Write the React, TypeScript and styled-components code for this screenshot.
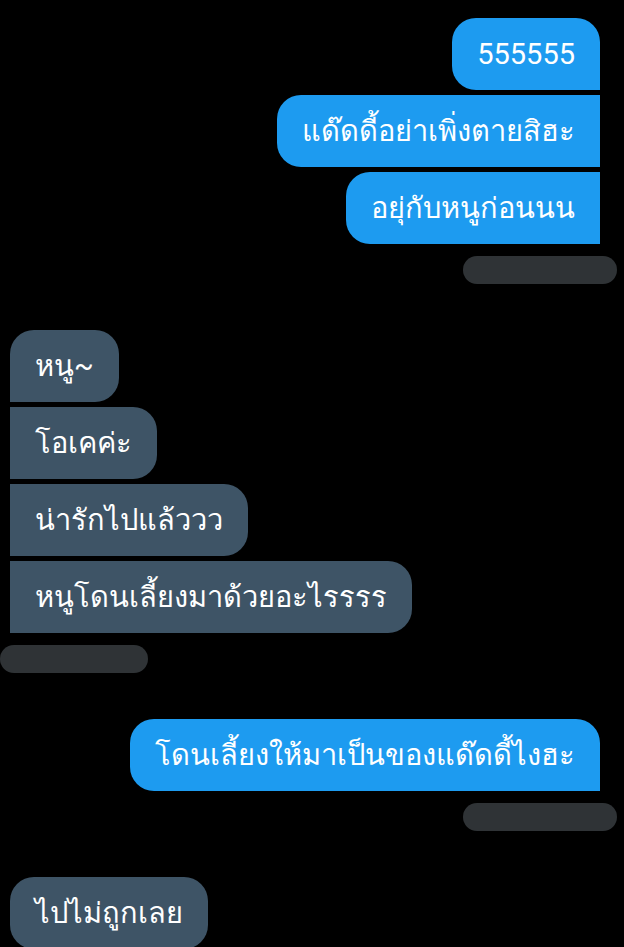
import React, { FC } from 'react';
import styled, { createGlobalStyle } from 'styled-components';

const GlobalStyle = createGlobalStyle`
  html, body {
    margin: 0;
    padding: 0;
    background: #000;
  }
  body {
    font-family: Roboto, "Noto Sans", "DejaVu Sans", sans-serif;
  }
`;

type Side = 'left' | 'right';

interface Message {
  side: Side;
  lines: string[];
}

const conversation: Message[] = [
  { side: 'right', lines: ['555555', 'แด๊ดดี้อย่าเพิ่งตายสิฮะ', 'อยุ่กับหนูก่อนนน'] },
  { side: 'left', lines: ['หนู~', 'โอเคค่ะ', 'น่ารักไปแล้ววว', 'หนูโดนเลี้ยงมาด้วยอะไรรรร'] },
  { side: 'right', lines: ['โดนเลี้ยงให้มาเป็นของแด๊ดดี้ไงฮะ'] },
  { side: 'left', lines: ['ไปไม่ถูกเลย'] },
];

const Page = styled.div`
  min-height: 947px;
  background: #000;
  padding: 18px 24px 0 10px;
  box-sizing: border-box;
  display: flex;
  flex-direction: column;
  overflow: hidden;
`;

const Group = styled.div<{ $side: Side; $last?: boolean }>`
  display: flex;
  flex-direction: column;
  align-items: ${(p) => (p.$side === 'right' ? 'flex-end' : 'flex-start')};
  gap: 5px;
  margin-bottom: ${(p) => (p.$last ? '0' : '46px')};
`;

const R = 24;

function radiusFor(side: Side, index: number): string {
  if (side === 'right') {
    return index === 0 ? `${R}px ${R}px 0 ${R}px` : `${R}px 0 0 ${R}px`;
  }
  return index === 0 ? `${R}px ${R}px ${R}px 0` : `0 ${R}px ${R}px 0`;
}

const Bubble = styled.div<{ $side: Side; $radius: string }>`
  height: 72px;
  box-sizing: border-box;
  display: flex;
  align-items: center;
  padding: 0 25px;
  border-radius: ${(p) => p.$radius};
  background: ${(p) => (p.$side === 'right' ? '#1d9bf0' : '#3e5466')};
  color: #fff;
  font-size: 29px;
  line-height: 40px;
  white-space: nowrap;
`;

// redacted timestamp row under each group
const Meta = styled.div<{ $side: Side }>`
  width: 154px;
  height: 28px;
  margin-top: 7px;
  border-radius: 14px;
  background: #2f3336;
  ${(p) => (p.$side === 'right' ? 'margin-right: -17px;' : 'margin-left: -10px; width: 148px;')}
`;

const MessageGroup: FC<{ message: Message; last: boolean }> = ({ message, last }) => (
  <Group $side={message.side} $last={last}>
    {message.lines.map((line, i) => (
      <Bubble key={i} $side={message.side} $radius={last ? `${R}px` : radiusFor(message.side, i)}>
        {line}
      </Bubble>
    ))}
    {!last && <Meta $side={message.side} />}
  </Group>
);

const App: FC = () => (
  <>
    <GlobalStyle />
    <Page>
      {conversation.map((m, i) => (
        <MessageGroup key={i} message={m} last={i === conversation.length - 1} />
      ))}
    </Page>
  </>
);

export default App;
